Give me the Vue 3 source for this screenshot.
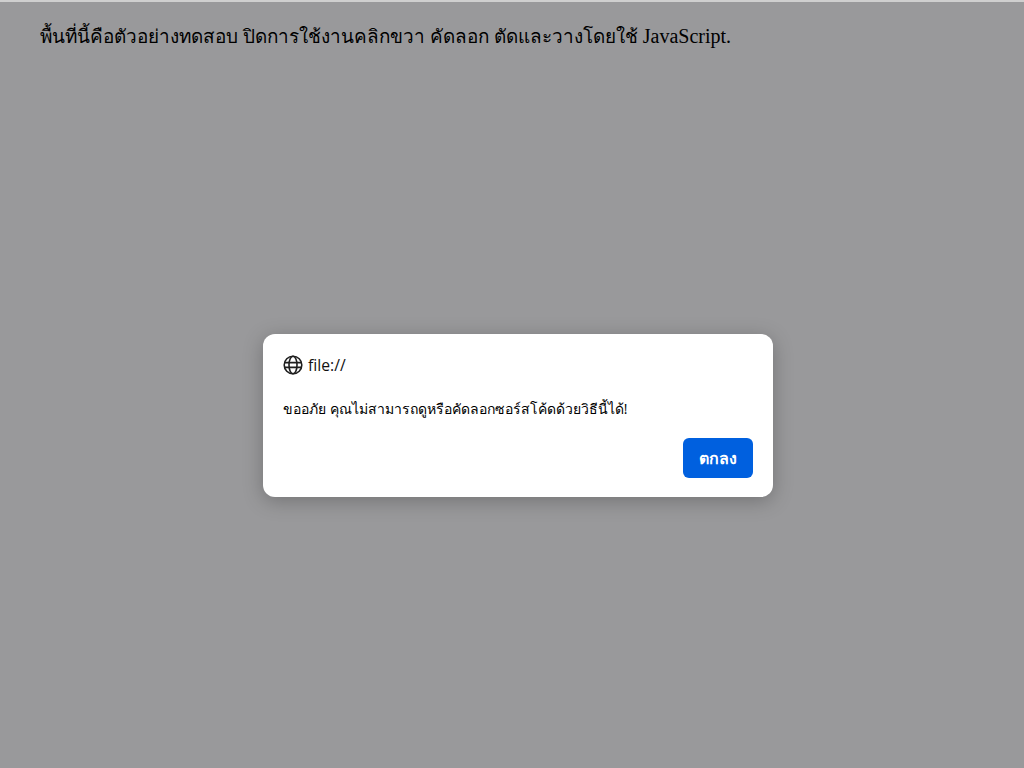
<script setup>
</script>

<template>
  <div class="page">
    <div class="topline"></div>
    <p class="intro"><span class="thai">พื้นที่นี้คือตัวอย่างทดสอบ ปิดการใช้งานคลิกขวา คัดลอก ตัดและวางโดยใช้</span> JavaScript.</p>
    <div class="overlay">
      <div class="dialog">
        <div class="origin">
          <svg class="globe" viewBox="0 0 20 20" width="20" height="20" fill="none" stroke="#1f1f1f" stroke-width="1.6">
            <circle cx="10" cy="10" r="8.8" />
            <ellipse cx="10" cy="10" rx="4" ry="8.8" />
            <path d="M1.5 7.6H18.5M1.5 12.4H18.5" />
          </svg>
          <span class="origin-text">file://</span>
        </div>
        <div class="message">ขออภัย คุณไม่สามารถดูหรือคัดลอกซอร์สโค้ดด้วยวิธีนี้ได้!</div>
        <div class="actions">
          <button class="ok" type="button">ตกลง</button>
        </div>
      </div>
    </div>
  </div>
</template>

<style>
html, body { margin: 0; padding: 0; background: #99999b; }
</style>

<style scoped>
.page {
  height: 768px;
  overflow: hidden;
  background: #99999b;
  display: flex;
  flex-direction: column;
  font-family: "Liberation Serif", "Noto Sans CJK SC", serif;
}
.topline { height: 2px; background: #cfcfcf; flex: none; }
.intro {
  margin: 20px 0 0 40px;
  font-size: 20px;
  line-height: 28px;
  color: #000;
}
.thai { font-size: 18.9px; font-family: "Noto Sans", "Liberation Serif", sans-serif; }
.overlay {
  display: flex;
  justify-content: center;
  padding: 284px 0 0 12px;
}
.dialog {
  width: 510px;
  height: 163px;
  box-sizing: border-box;
  background: #fff;
  border-radius: 12px;
  padding: 20px 20px 19px;
  box-shadow: 0 4px 20px rgba(0, 0, 0, 0.25);
  display: flex;
  flex-direction: column;
  font-family: "Open Sans", "Noto Sans", sans-serif;
}
.origin { display: flex; align-items: center; gap: 5px; height: 21px; }
.origin-text { font-size: 15.7px; color: #111; }
.message { margin-top: 24px; font-size: 14px; line-height: 20px; color: #000; }
.actions { margin-top: auto; display: flex; justify-content: flex-end; }
.ok {
  width: 70px;
  height: 40px;
  border: none;
  border-radius: 6px;
  background: #0060df;
  color: #fff;
  font: 700 16px "Open Sans", "Noto Sans", sans-serif;
}
</style>
